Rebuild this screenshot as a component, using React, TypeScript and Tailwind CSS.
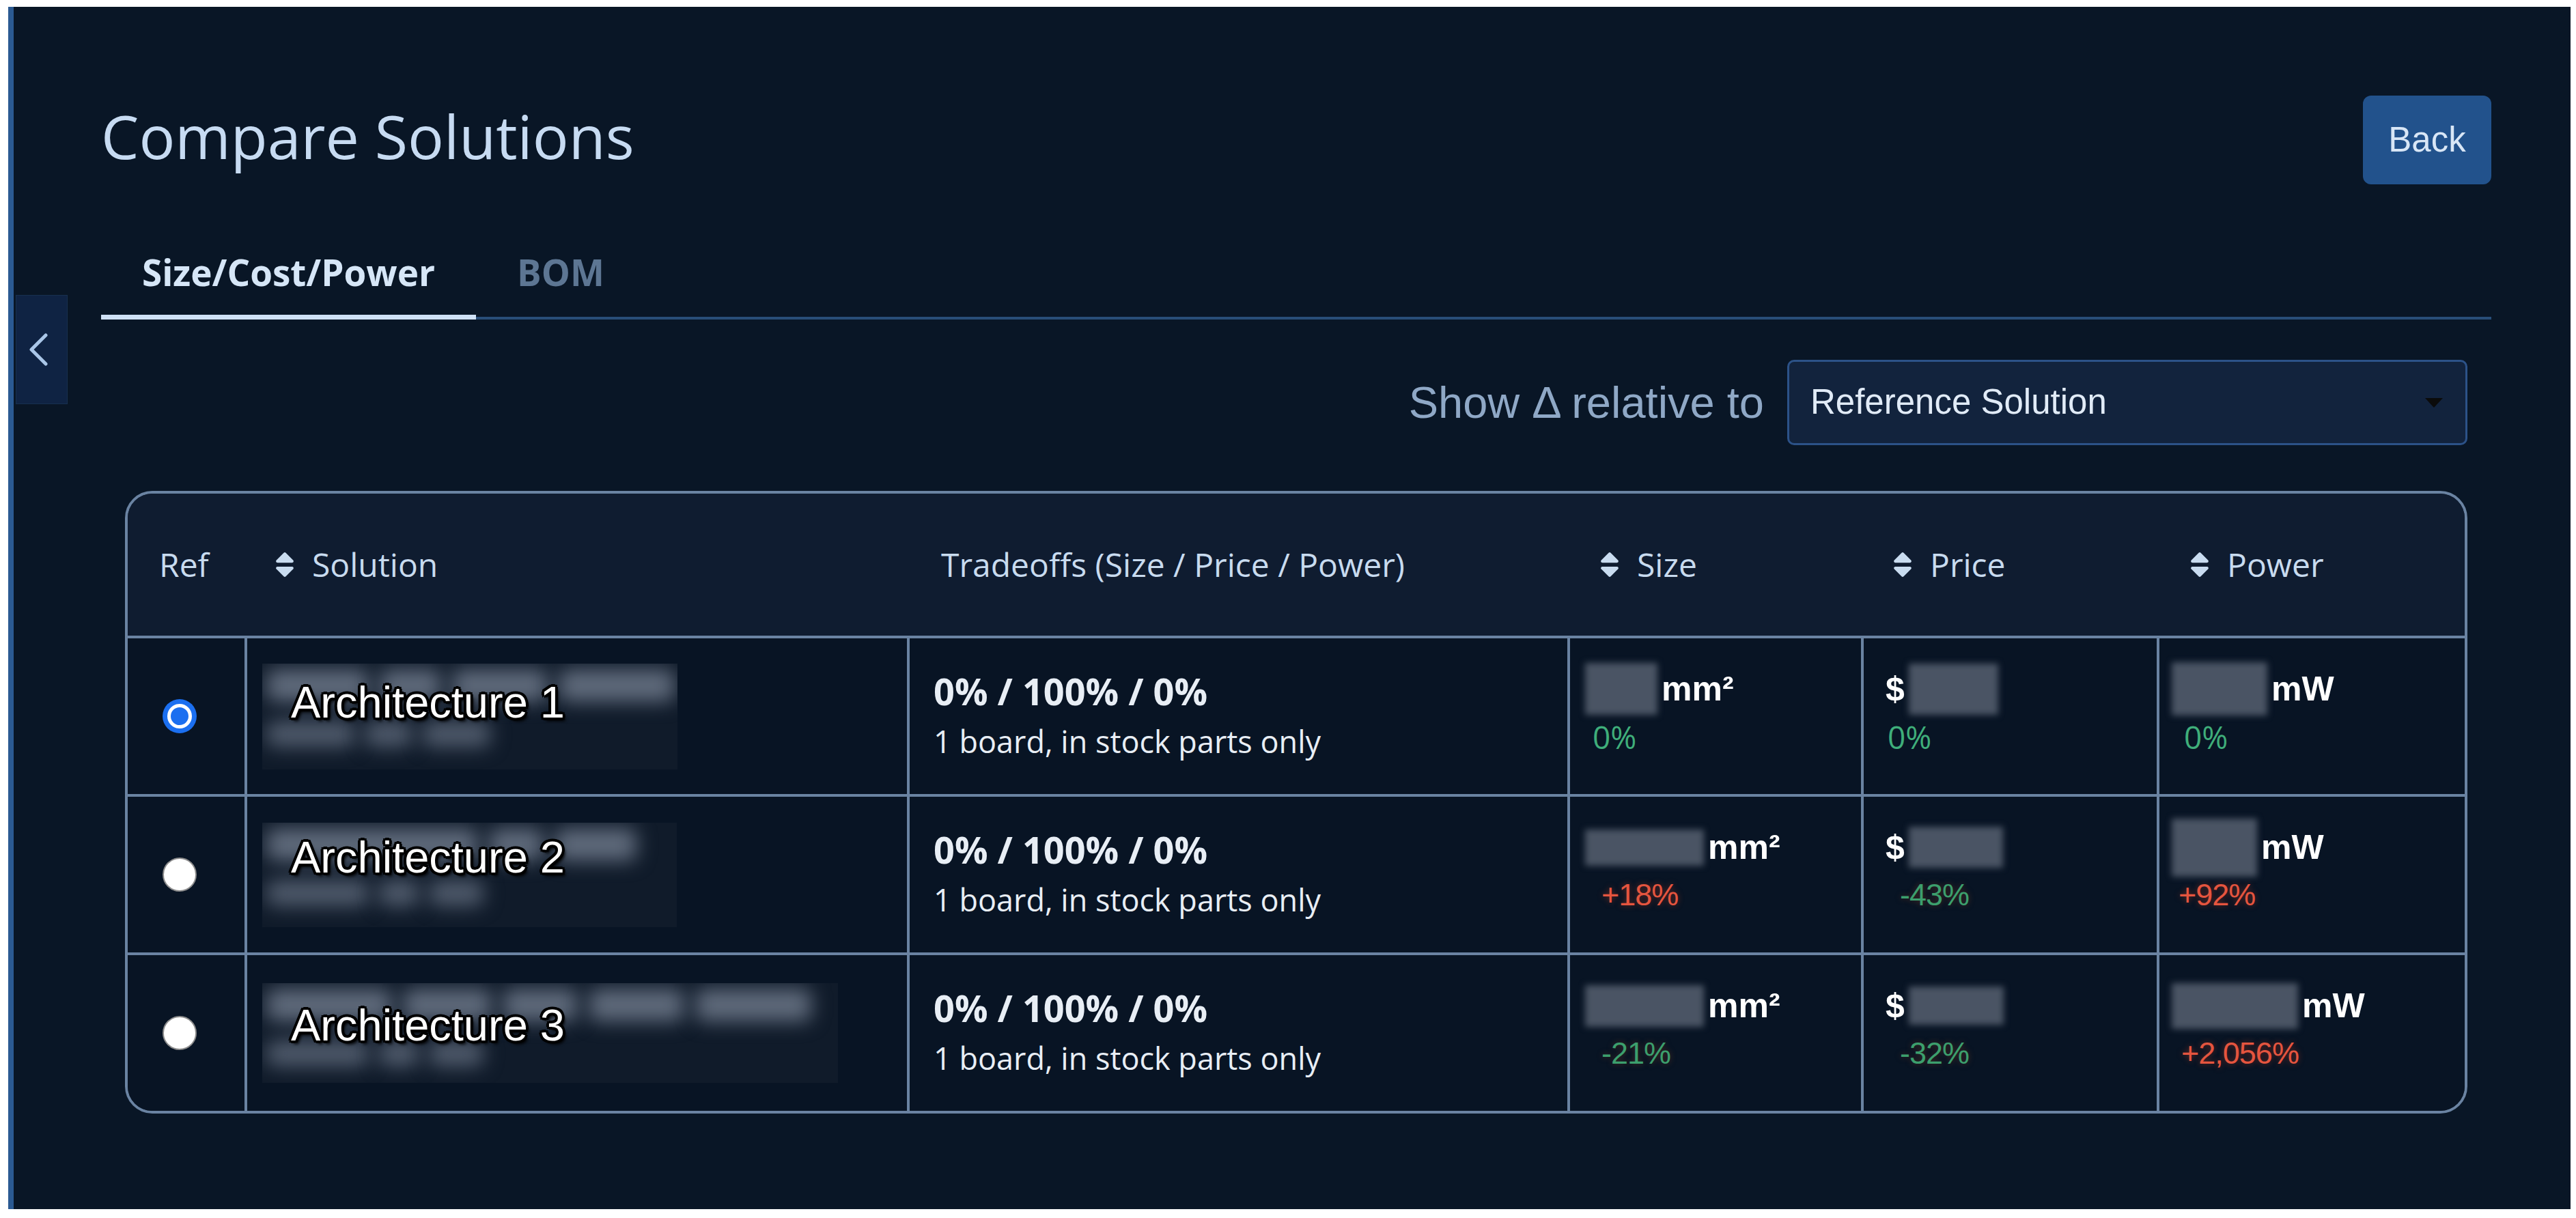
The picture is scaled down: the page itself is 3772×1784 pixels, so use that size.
import { FaSort } from "react-icons/fa";

type Metric = {
  blurW: number;
  blurH: number;
  prefix?: string;
  unit?: string;
  pct: string;
  pctClass: string;
};

type Row = {
  name: string;
  checked: boolean;
  blurW: number;
  blurH: number;
  labelTop: string;
  line1: number[];
  line2: number[];
  size: Metric;
  price: Metric;
  power: Metric;
};

const pctFirst = "[font-family:'Open_Sans',sans-serif] text-[46px] text-[#3fae7a]";
const pctRed =
  "[font-family:'Liberation_Sans',Arial,sans-serif] text-[45px] tracking-[-1px] text-[#e5553f] [text-shadow:0_0_8px_rgba(150,50,30,0.7)]";
const pctGreen =
  "[font-family:'Liberation_Sans',Arial,sans-serif] text-[45px] tracking-[-1px] text-[#3c9f6d] [text-shadow:0_0_8px_rgba(120,60,30,0.6)]";

const rows: Row[] = [
  {
    name: "Architecture 1",
    checked: true,
    blurW: 608,
    blurH: 155,
    labelTop: "top-[24px]",
    line1: [150, 90, 140, 170],
    line2: [130, 70, 100],
    size: { blurW: 106, blurH: 76, unit: "mm²", pct: "0%", pctClass: `ml-[11px] ${pctFirst}` },
    price: { blurW: 131, blurH: 75, prefix: "$", pct: "0%", pctClass: `ml-[3px] ${pctFirst}` },
    power: { blurW: 140, blurH: 78, unit: "mW", pct: "0%", pctClass: `ml-[18px] ${pctFirst}` },
  },
  {
    name: "Architecture 2",
    checked: false,
    blurW: 607,
    blurH: 153,
    labelTop: "top-[18px]",
    line1: [310, 80, 120],
    line2: [150, 60, 80],
    size: { blurW: 174, blurH: 53, unit: "mm²", pct: "+18%", pctClass: `ml-[24px] ${pctRed}` },
    price: { blurW: 138, blurH: 60, prefix: "$", pct: "-43%", pctClass: `ml-[21px] ${pctGreen}` },
    power: { blurW: 125, blurH: 85, unit: "mW", pct: "+92%", pctClass: `ml-[10px] ${pctRed}` },
  },
  {
    name: "Architecture 3",
    checked: false,
    blurW: 843,
    blurH: 146,
    labelTop: "top-[29px]",
    line1: [184, 130, 110, 140, 170],
    line2: [150, 60, 80],
    size: { blurW: 174, blurH: 61, unit: "mm²", pct: "-21%", pctClass: `ml-[24px] ${pctGreen}` },
    price: { blurW: 139, blurH: 56, prefix: "$", pct: "-32%", pctClass: `ml-[21px] ${pctGreen}` },
    power: { blurW: 185, blurH: 67, unit: "mW", pct: "+2,056%", pctClass: `ml-[14px] ${pctRed}` },
  },
];

function Tab({ active, children }: { active?: boolean; children: string }) {
  return (
    <button
      className={
        active
          ? "px-[60px] pb-[28px] mb-[-4px] border-b-[7px] border-[#cfe1f6] text-[53px] leading-[68px] font-bold text-[#d6e6f7] [font-family:'Open_Sans',sans-serif]"
          : "px-[60px] pb-[28px] mb-[-4px] border-b-[7px] border-transparent text-[53px] leading-[68px] font-bold text-[#5d7693] [font-family:'Open_Sans',sans-serif]"
      }
    >
      {children}
    </button>
  );
}

function SortHead({ label, className }: { label: string; className: string }) {
  return (
    <div className={`flex items-center gap-[17px] ${className}`}>
      <FaSort size={46} color="#c9dcf0" />
      <span>{label}</span>
    </div>
  );
}

function Radio({ checked }: { checked: boolean }) {
  if (checked) {
    return (
      <div className="w-[50px] h-[50px] rounded-full bg-[#1b6ff0] flex items-center justify-center">
        <div className="w-[36px] h-[36px] rounded-full border-[5px] border-white bg-[#1b6ff0]" />
      </div>
    );
  }
  return <div className="w-[50px] h-[50px] rounded-full bg-white border-[2px] border-[#8d8d8d]" />;
}

function NameCell({ row }: { row: Row }) {
  return (
    <div className="border-l-[4px] border-[#6a83a2] flex items-center pl-[22px]">
      <div
        className="relative overflow-hidden bg-[#101b2a] pt-[8px] pl-[6px]"
        style={{ width: row.blurW, height: row.blurH }}
      >
        <div className="flex gap-[16px]">
          {row.line1.map((w, i) => (
            <div key={i} className="h-[48px] bg-[#5f6a7b] blur-[14px] rounded-[12px]" style={{ width: w }} />
          ))}
        </div>
        <div className="flex gap-[14px] mt-[28px]">
          {row.line2.map((w, i) => (
            <div key={i} className="h-[38px] bg-[#505b6c] blur-[14px] rounded-[12px]" style={{ width: w }} />
          ))}
        </div>
        <span
          className={`absolute left-[42px] ${row.labelTop} text-[65px] leading-none text-white [font-family:'Liberation_Sans',Arial,sans-serif] [text-shadow:0_0_4px_#000,4px_0_0_#000,-4px_0_0_#000,0_4px_0_#000,0_-4px_0_#000,3px_3px_0_#000,-3px_-3px_0_#000,3px_-3px_0_#000,-3px_3px_0_#000,4px_5px_4px_#000]`}
        >
          {row.name}
        </span>
      </div>
    </div>
  );
}

function MetricCell({ m, pad }: { m: Metric; pad: string }) {
  return (
    <div className={`border-l-[4px] border-[#6a83a2] flex flex-col pt-[39px] ${pad}`}>
      <div className="h-[70px] flex items-center gap-[6px] text-[50px] font-bold text-white [font-family:'Liberation_Sans',Arial,sans-serif]">
        {m.prefix && <span>{m.prefix}</span>}
        <div className="bg-[#4a5464] blur-[5px]" style={{ width: m.blurW, height: m.blurH }} />
        {m.unit && <span>{m.unit}</span>}
      </div>
      <div className="h-[70px] flex items-center">
        <span className={m.pctClass}>{m.pct}</span>
      </div>
    </div>
  );
}

export default function App() {
  return (
    <div className="w-full h-[1784px] bg-white pt-[10px] pl-[12px] pr-[8px] pb-[13px]">
      <div className="flex h-full">
        <div className="w-[8px] bg-[#2b5a92]" />
        <main className="relative flex-1 bg-[#091626] pl-[128px] pr-[116px] pt-[130px]">
          <div className="absolute left-[3px] top-[422px] w-[76px] h-[160px] bg-[#0f2343] border border-[#17304f] flex items-center pl-[17px]">
            <svg width="30" height="50" viewBox="0 0 30 50">
              <polyline
                points="26,4 5,25 26,46"
                fill="none"
                stroke="#a9c6e8"
                strokeWidth="5"
                strokeLinecap="round"
                strokeLinejoin="round"
              />
            </svg>
          </div>

          <div className="flex justify-between items-start">
            <h1 className="mt-[-1px] text-[88px] leading-[120px] text-[#c7dbf2] [font-family:'Open_Sans',sans-serif]">
              Compare Solutions
            </h1>
            <button className="w-[188px] h-[130px] rounded-[12px] bg-[#22528c] text-[51px] text-[#d8e6f6] [font-family:'Liberation_Sans',Arial,sans-serif]">
              Back
            </button>
          </div>

          <div className="mt-[95px] flex border-b-[4px] border-[#284d78]">
            <Tab active>Size/Cost/Power</Tab>
            <Tab>BOM</Tab>
          </div>

          <div className="mt-[59px] flex justify-end items-center gap-[34px] pr-[35px] [font-family:'Liberation_Sans',Arial,sans-serif]">
            <span className="text-[65px] text-[#8fa8c6]">Show Δ relative to</span>
            <div className="w-[996px] h-[125px] rounded-[10px] border-[3px] border-[#2c5288] bg-[#12233d] flex items-center justify-between pl-[31px] pr-[33px]">
              <span className="text-[51px] text-[#e1ebf7]">Reference Solution</span>
              <svg width="26" height="14" viewBox="0 0 26 14">
                <polygon points="0,0 26,0 13,14" fill="#0b0b0b" />
              </svg>
            </div>
          </div>

          <div className="mt-[67px] mx-[35px] rounded-[40px] border-[4px] border-[#6a83a2] overflow-hidden">
            <div className="grid grid-cols-[171px_970px_967px_430px_433px_451px] h-[208px] bg-[#0f1c30] items-center text-[48px] text-[#c8dbef] [font-family:'Open_Sans',sans-serif]">
              <div className="pl-[46px]">Ref</div>
              <SortHead label="Solution" className="pl-[36px]" />
              <div className="pl-[50px]">Tradeoffs (Size / Price / Power)</div>
              <SortHead label="Size" className="pl-[39px]" />
              <SortHead label="Price" className="pl-[38px]" />
              <SortHead label="Power" className="pl-[40px]" />
            </div>

            {rows.map((row) => (
              <div
                key={row.name}
                className="grid grid-cols-[171px_970px_967px_430px_433px_451px] h-[232px] border-t-[4px] border-[#6a83a2] bg-[#081424]"
              >
                <div className="flex items-center pl-[51px]">
                  <Radio checked={row.checked} />
                </div>
                <NameCell row={row} />
                <div className="border-l-[4px] border-[#6a83a2] flex flex-col justify-center pl-[35px] text-[#e8eef5] [font-family:'Open_Sans',sans-serif]">
                  <div className="text-[54px] leading-[74px] font-bold">0% / 100% / 0%</div>
                  <div className="text-[45px] leading-[74px]">1 board, in stock parts only</div>
                </div>
                <MetricCell m={row.size} pad="pl-[22px]" />
                <MetricCell m={row.price} pad="pl-[32px]" />
                <MetricCell m={row.power} pad="pl-[18px]" />
              </div>
            ))}
          </div>
        </main>
      </div>
    </div>
  );
}
